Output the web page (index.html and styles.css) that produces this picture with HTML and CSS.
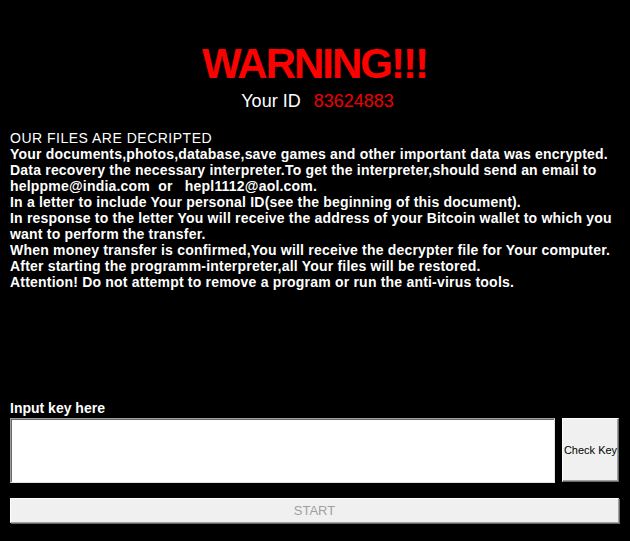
FILE: index.html
```html
<!DOCTYPE html>
<html>
<head>
  <title>Warning</title>
  <link rel="stylesheet" href="styles.css">
</head>
<body>
<div id="screen">
  <h1 id="title">WARNING!!!</h1>
  <div id="idline">Your ID <span id="idnum">83624883</span></div>

  <div id="note">
    <div class="first">OUR FILES ARE DECRIPTED</div>
    <div>Your documents,photos,database,save games and other important data was encrypted.</div>
    <div>Data recovery the necessary interpreter.To get the interpreter,should send an email to</div>
    <div>helppme@india.com &nbsp;or &nbsp;&nbsp;hepl1112@aol.com.</div>
    <div>In a letter to include Your personal ID(see the beginning of this document).</div>
    <div>In response to the letter You will receive the address of your Bitcoin wallet to which you</div>
    <div>want to perform the transfer.</div>
    <div>When money transfer is confirmed,You will receive the decrypter file for Your computer.</div>
    <div>After starting the programm-interpreter,all Your files will be restored.</div>
    <div>Attention! Do not attempt to remove a program or run the anti-virus tools.</div>
  </div>

  <div id="label">Input key here</div>
  <div id="keyrow">
    <textarea id="keybox"></textarea>
    <button id="check">Check Key</button>
  </div>
  <button id="start" disabled>START</button>
</div>
</body>
</html>
```

FILE: styles.css
```css
body{
  margin: 0;
  background: #000;
  font-family: "Liberation Sans", Arial, sans-serif;
  color: #fff;
}

#screen{
  height: 541px;
  padding: 0 11px 0 10px;
  box-sizing: border-box;
  display: flex;
  flex-direction: column;
}

#title{
  margin: 40px 0 0 0;
  text-align: center;
  color: #f00;
  font-size: 42px;
  letter-spacing: -2px;
  line-height: 48px;
  font-weight: bold;
}

#idline{
  text-align: center;
  font-size: 18px;
  line-height: 22px;
  margin-top: 2px;
  padding-left: 6px;
}

#idnum{
  color: #e00;
  margin-left: 8px;
}

#note{
  margin-top: 18px;
  font-size: 14px;
  line-height: 16px;
  font-weight: bold;
  letter-spacing: 0.2px;
}

#note .first{
  font-weight: normal;
  letter-spacing: 0.5px;
}

#label{
  margin-top: auto;
  font-size: 14px;
  font-weight: bold;
  line-height: 16px;
}

#keyrow{
  display: flex;
  gap: 7px;
  margin-top: 2px;
}

#keybox{
  flex: 1;
  height: 65px;
  box-sizing: border-box;
  margin: 0;
  background: #fff;
  border: 1px solid;
  border-color: #a0a0a0 #e3e3e3 #e3e3e3 #a0a0a0;
  box-shadow: inset 1px 1px 0 #696969;
  resize: none;
}

#check{
  width: 57px;
  height: 64px;
  padding: 0;
  background: #f0f0f0;
  border: 1px solid;
  border-color: #fff #696969 #696969 #fff;
  box-shadow: inset -1px -1px 0 #a0a0a0;
  font-family: "Liberation Sans", Arial, sans-serif;
  font-size: 11px;
  color: #000;
  white-space: nowrap;
  text-align: center;
}

#start{
  margin: 15px 0 18px 0;
  height: 25px;
  background: #f0f0f0;
  border: 1px solid;
  border-color: #fff #a0a0a0 #a0a0a0 #fff;
  box-shadow: 1px 1px 0 #696969;
  color: #a0a0a0;
  font-family: "Liberation Sans", Arial, sans-serif;
  font-size: 13px;
  padding: 0;
}
```
